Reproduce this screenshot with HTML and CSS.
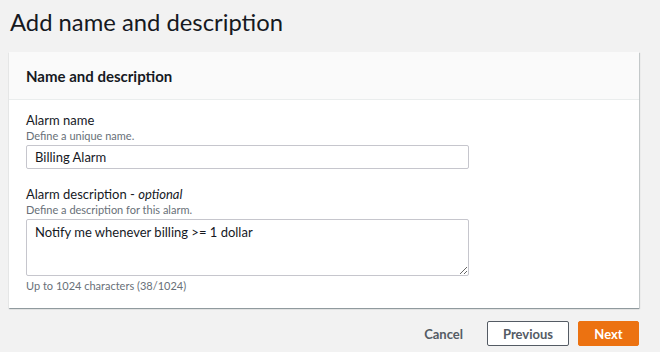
FILE: index.html
```html
<!DOCTYPE html>
<html lang="en">
<head>
    <meta charset="UTF-8">
    <meta name="viewport" content="width=device-width, initial-scale=1.0">
    <title>Add name and description</title>
    <link rel="stylesheet" href="styles.css">
</head>
<body>
    <h1 class="page-title">Add name and description</h1>

    <div class="card">
        <div class="card-header">
            <h2>Name and description</h2>
        </div>
        <div class="card-body">
            <div class="field">
                <label class="field-label" for="alarmName">Alarm name</label>
                <div class="field-hint">Define a unique name.</div>
                <input class="input" id="alarmName" type="text" value="Billing Alarm">
            </div>
            <div class="field">
                <label class="field-label" for="alarmDesc">Alarm description - <i>optional</i></label>
                <div class="field-hint">Define a description for this alarm.</div>
                <textarea class="input textarea" id="alarmDesc">Notify me whenever billing &gt;= 1 dollar</textarea>
                <div class="field-hint counter">Up to 1024 characters (38/1024)</div>
            </div>
        </div>
    </div>

    <div class="actions">
        <button class="button link">Cancel</button>
        <button class="button normal">Previous</button>
        <button class="button primary">Next</button>
    </div>
</body>
</html>
```

FILE: styles.css
```css
body {
    font-family: Lato, Arial, sans-serif;
    margin: 0;
    padding: 0 21px 0 9px;
    background-color: #f2f2f2;
    color: #16191f;
}

.page-title {
    font-size: 23.8px;
    font-weight: 400;
    margin: 0;
    padding: 4px 0 0 1px;
    height: 48px;
    line-height: 36px;
}

.card {
    background-color: #fff;
    box-shadow: 0 1px 1px rgba(0, 28, 36, 0.3), 1px 1px 1px rgba(0, 28, 36, 0.15);
}

.card-header {
    background-color: #fafafa;
    border-bottom: 1px solid #eaeded;
    height: 47px;
    display: flex;
    align-items: center;
    padding: 0 17px;
}

.card-header h2 {
    font-size: 15px;
    font-weight: 700;
    margin: 0;
}

.card-body {
    padding: 12px 17px 14px;
}

.field {
    margin-bottom: 17px;
}

.field:last-child {
    margin-bottom: 0;
}

.field-label {
    display: block;
    font-size: 13px;
    line-height: 16px;
}

.field-hint {
    font-size: 11px;
    line-height: 16px;
    color: #687078;
    margin-bottom: 1px;
}

.counter {
    margin: 2px 0 0;
}

.input {
    display: block;
    box-sizing: border-box;
    width: 443px;
    height: 24px;
    border: 1px solid #c6c6cd;
    border-radius: 2px;
    padding: 2px 8px;
    font-family: inherit;
    font-size: 13px;
    color: #16191f;
    background: #fff;
}

.textarea {
    height: 57px;
    padding: 3px 8px;
    line-height: 18px;
    resize: vertical;
}

.actions {
    display: flex;
    justify-content: flex-end;
    align-items: center;
    gap: 9px;
    margin-top: 13px;
}

.button {
    font-family: inherit;
    font-size: 13px;
    font-weight: 700;
    height: 25px;
    padding: 0 10px;
    border-radius: 2px;
    cursor: pointer;
}

.button.link {
    background: none;
    border: none;
    color: #545b64;
    margin-right: 5px;
}

.button.normal {
    background-color: #fff;
    border: 1px solid #545b64;
    color: #545b64;
    width: 82px;
}

.button.primary {
    background-color: #ec7211;
    border: 1px solid #ec7211;
    color: #fff;
    width: 61px;
}
```
